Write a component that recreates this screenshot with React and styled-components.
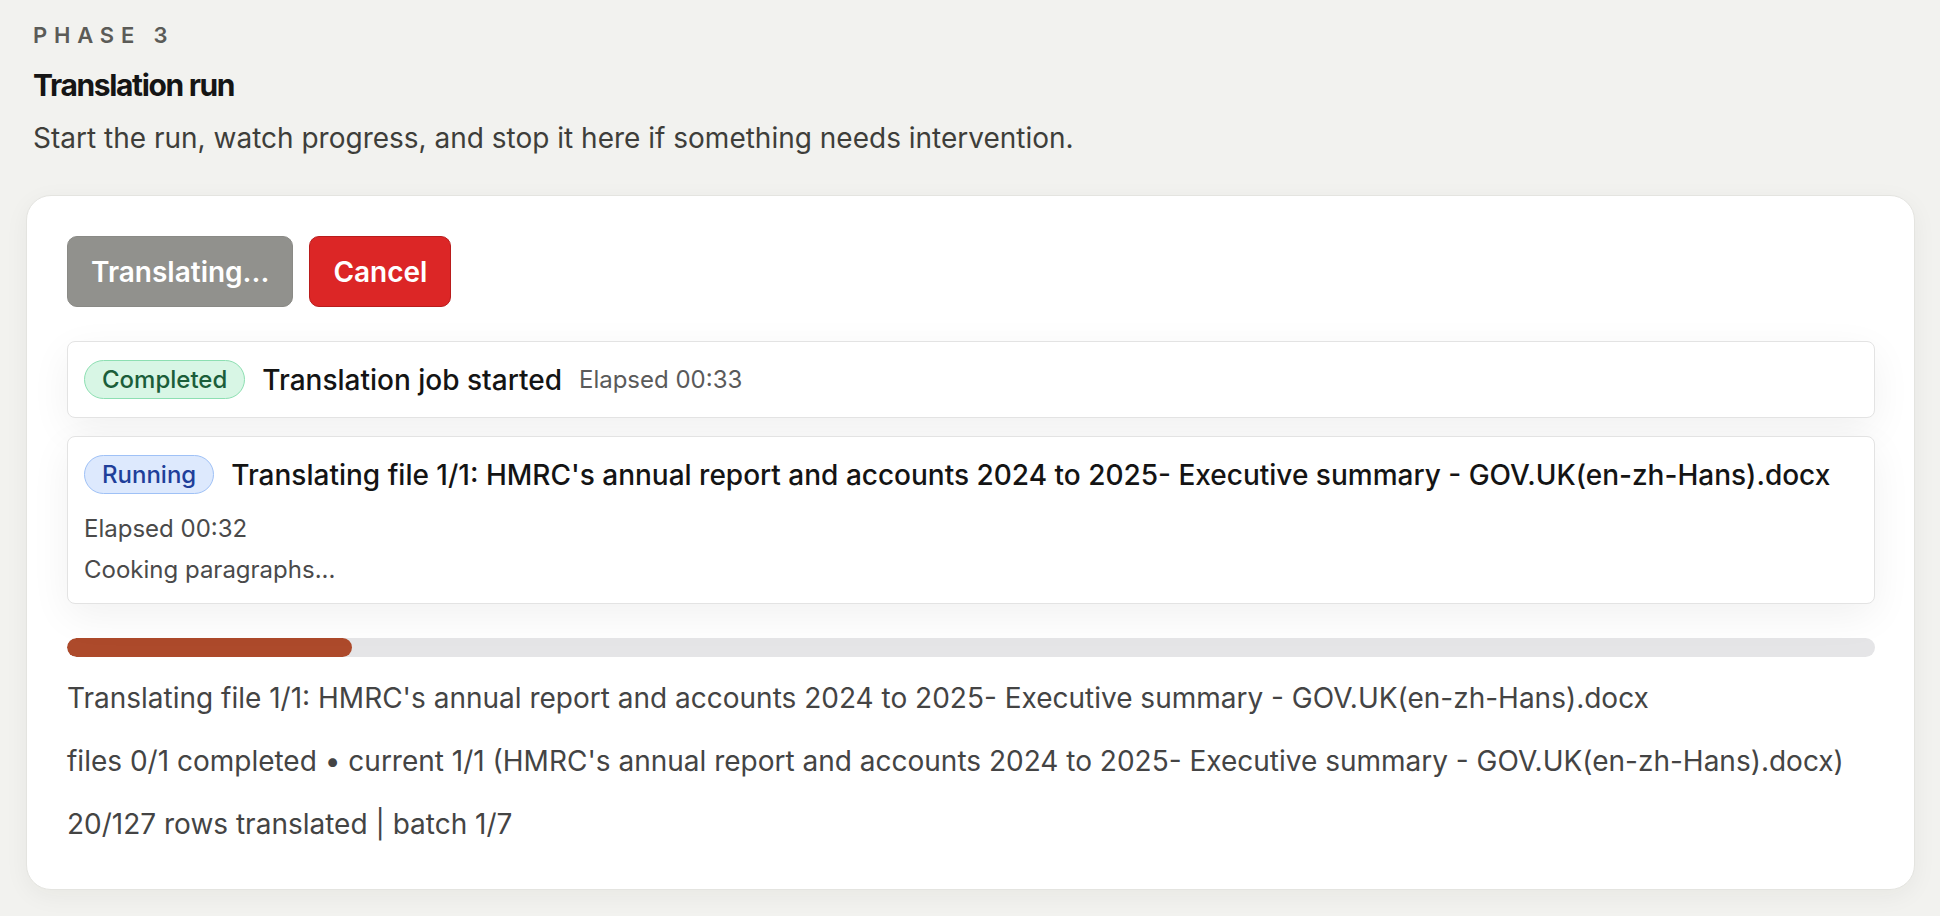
import React from 'react';
import styled, { createGlobalStyle } from 'styled-components';

const GlobalStyle = createGlobalStyle`
  html, body {
    margin: 0;
    padding: 0;
    background: #f2f2ef;
    font-family: Inter, 'Noto Sans', 'Liberation Sans', sans-serif;
    -webkit-font-smoothing: antialiased;
  }
`;

const StyledPage = styled.main`
  padding: 21px 25px 29px 26px;
`;

const StyledHeader = styled.header`
  padding-left: 7px;
  margin-bottom: 38px;

  .eyebrow {
    margin: 0;
    font-size: 22px;
    line-height: 28px;
    font-weight: 600;
    letter-spacing: 0.31em;
    text-transform: uppercase;
    color: #5b5b57;
  }

  h2 {
    margin: 18px 0 0;
    font-size: 30px;
    line-height: 36px;
    font-weight: 700;
    letter-spacing: -0.045em;
    color: #151515;
  }

  .lede {
    margin: 16px 0 0;
    font-size: 28px;
    line-height: 38px;
    color: #3e3e3a;
  }
`;

const StyledCard = styled.section`
  background: #fff;
  border: 1px solid #e4e4e0;
  border-radius: 25px;
  box-shadow: 0 6px 24px rgba(30, 30, 20, 0.05);
  padding: 40px 39px 46px 40px;
`;

const StyledActions = styled.div`
  display: flex;
  gap: 16px;
  margin-bottom: 34px;
`;

const StyledButton = styled.button`
  height: 71px;
  padding: 0 23px;
  border-radius: 10px;
  border: 1px solid ${({ $variant }) => ($variant === 'danger' ? '#b91c1c' : '#8a8a86')};
  background: ${({ $variant }) => ($variant === 'danger' ? '#dc2626' : '#91918d')};
  color: #fff;
  font-family: inherit;
  font-size: 28px;
  font-weight: 600;
  cursor: ${({ disabled }) => (disabled ? 'default' : 'pointer')};
`;

const StyledSteps = styled.ul`
  display: flex;
  flex-direction: column;
  gap: 18px;
  margin: 0 0 34px;
  padding: 0;
  list-style: none;
`;

const StyledStep = styled.li`
  background: #fff;
  border: 1px solid #e3e3e3;
  border-radius: 8px;
  box-shadow: 0 12px 40px rgba(0, 0, 0, 0.06);
  padding: 18px 16px 18px;

  .head {
    display: flex;
    align-items: center;
    gap: 17px;
  }

  .title {
    font-size: 28px;
    font-weight: 500;
    color: #141414;
  }

  .elapsed {
    font-size: 24px;
    color: #5a5a5a;
  }

  .meta {
    margin: 0;
    font-size: 24px;
    line-height: 30px;
    color: #4a4a4a;
  }

  .meta:first-of-type {
    margin-top: 20px;
  }

  .meta + .meta {
    margin-top: 11px;
  }
`;

const badgeColors = {
  done: { bg: '#d8f6e5', border: '#8ddfb2', fg: '#1b5e3a' },
  running: { bg: '#dde9fd', border: '#9fc1f6', fg: '#1f3f9a' },
};

const StyledBadge = styled.span`
  display: inline-flex;
  align-items: center;
  height: 39px;
  padding: 0 17px;
  border-radius: 999px;
  box-sizing: border-box;
  background: ${({ $tone }) => badgeColors[$tone].bg};
  border: 1.5px solid ${({ $tone }) => badgeColors[$tone].border};
  color: ${({ $tone }) => badgeColors[$tone].fg};
  font-size: 24px;
  font-weight: 500;
`;

const StyledTrack = styled.div`
  height: 19px;
  border-radius: 10px;
  background: #e5e5e7;
  overflow: hidden;
  margin-bottom: 22px;

  .fill {
    height: 100%;
    border-radius: 10px;
    background: #ad4a2b;
  }
`;

const StyledStatus = styled.div`
  p {
    margin: 0;
    font-size: 28px;
    line-height: 38px;
    color: #444;
  }

  p + p {
    margin-top: 25px;
  }
`;

const fileName = "HMRC's annual report and accounts 2024 to 2025- Executive summary - GOV.UK(en-zh-Hans).docx";

const App = () => {
  const done = 20;
  const total = 127;

  return (
    <>
      <GlobalStyle />
      <StyledPage>
        <StyledHeader>
          <p className="eyebrow">Phase 3</p>
          <h2>Translation run</h2>
          <p className="lede">
            Start the run, watch progress, and stop it here if something needs intervention.
          </p>
        </StyledHeader>

        <StyledCard>
          <StyledActions>
            <StyledButton disabled>Translating...</StyledButton>
            <StyledButton $variant="danger">Cancel</StyledButton>
          </StyledActions>

          <StyledSteps>
            <StyledStep>
              <div className="head">
                <StyledBadge $tone="done">Completed</StyledBadge>
                <span className="title">Translation job started</span>
                <span className="elapsed">Elapsed 00:33</span>
              </div>
            </StyledStep>
            <StyledStep>
              <div className="head">
                <StyledBadge $tone="running">Running</StyledBadge>
                <span className="title">Translating file 1/1: {fileName}</span>
              </div>
              <p className="meta">Elapsed 00:32</p>
              <p className="meta">Cooking paragraphs...</p>
            </StyledStep>
          </StyledSteps>

          <StyledTrack>
            <div className="fill" style={{ width: `${(done / total) * 100}%` }} />
          </StyledTrack>

          <StyledStatus>
            <p>Translating file 1/1: {fileName}</p>
            <p>files 0/1 completed • current 1/1 ({fileName})</p>
            <p>
              {done}/{total} rows translated | batch 1/7
            </p>
          </StyledStatus>
        </StyledCard>
      </StyledPage>
    </>
  );
};

export default App;
